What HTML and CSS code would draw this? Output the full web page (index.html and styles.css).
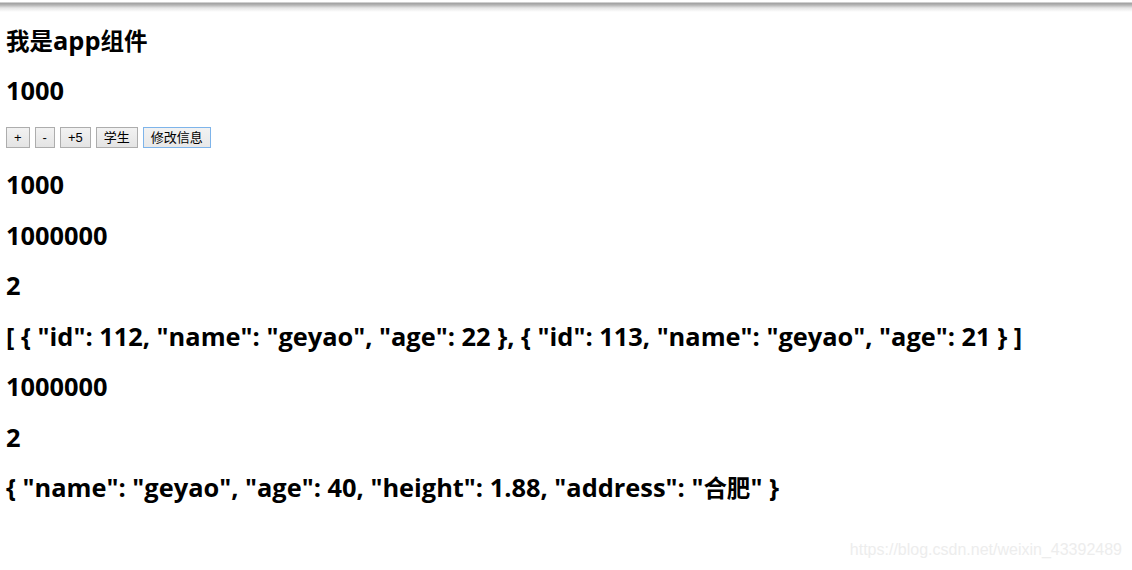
FILE: index.html
```html
<!DOCTYPE html>
<html lang="zh">
<head>
<meta charset="utf-8">
<title>app</title>
<link rel="stylesheet" href="styles.css">
</head>
<body>
<div class="topbar"></div>
<div class="page">
  <h3 class="line"><span class="cjk">我是</span>app<span class="cjk">组件</span></h3>
  <h3 class="line">1000</h3>
  <div class="btns">
    <button class="btn">+</button>
    <button class="btn">-</button>
    <button class="btn">+5</button>
    <button class="btn">学生</button>
    <button class="btn focus">修改信息</button>
  </div>
  <h3 class="line">1000</h3>
  <h3 class="line">1000000</h3>
  <h3 class="line">2</h3>
  <h3 class="line">[ { "id": 112, "name": "geyao", "age": 22 }, { "id": 113, "name": "geyao", "age": 21 } ]</h3>
  <h3 class="line">1000000</h3>
  <h3 class="line">2</h3>
  <h3 class="line">{ "name": "geyao", "age": 40, "height": 1.88, "address": "<span class="cjk">合肥</span>" }</h3>
</div>
<div class="watermark">https://blog.csdn.net/weixin_43392489</div>
</body>
</html>
```
FILE: styles.css
```css
html, body {
  margin: 0;
  padding: 0;
  background: #fff;
}
body {
  width: 1132px;
  height: 570px;
  overflow: hidden;
  position: relative;
  font-family: "Open Sans", "Noto Sans CJK SC", sans-serif;
  color: #000;
}
.topbar {
  height: 12px;
  background: linear-gradient(to bottom, #fff 0, #fff 2px, #a0a0a0 3px, #b4b4b4 5px, #e6e6e6 8px, #fff 12px);
}
.page {
  display: flex;
  flex-direction: column;
  align-items: flex-start;
  gap: 22.5px;
  padding: 13.5px 6px 0;
}
.line {
  margin: 0;
  height: 28px;
  font-size: 25.4px;
  line-height: 28px;
  font-weight: 700;
  white-space: nowrap;
}
.cjk {
  font-size: 23.5px;
  line-height: 1;
}
.btns {
  display: flex;
  gap: 5px;
  height: 21px;
  align-items: flex-start;
  margin-top: 0;
}
.btn {
  font-family: "Liberation Sans", "Noto Sans CJK SC", sans-serif;
  font-size: 13px;
  line-height: 19px;
  height: 21px;
  padding: 0 7px;
  border: 1px solid #adadad;
  border-radius: 0;
  background: linear-gradient(to bottom, #f2f2f2, #e4e4e4);
  color: #000;
}
.btn.focus {
  border-color: #7eb4ea;
  background: linear-gradient(to bottom, #f2f2f2, #e8e8e8);
}
.watermark {
  position: absolute;
  right: 10px;
  bottom: 11px;
  font-family: "Liberation Sans", Arial, sans-serif;
  font-size: 16px;
  color: #ededed;
}
```
